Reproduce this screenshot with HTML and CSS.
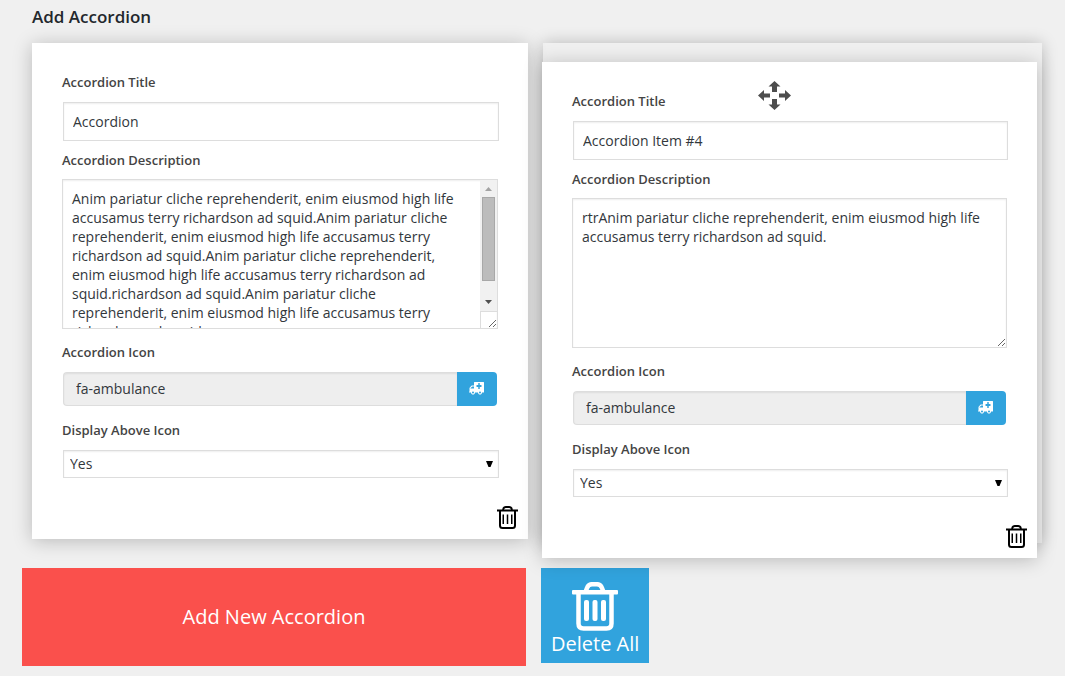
FILE: index.html
```html
<!DOCTYPE html>
<html lang="en">
<head>
<meta charset="utf-8">
<title>Add Accordion</title>
<link rel="stylesheet" href="styles.css">
</head>
<body>
<svg class="sprite" aria-hidden="true">
  <symbol id="ambulance" viewBox="0 0 1920 1792">
    <path fill-rule="evenodd" d="M640 1344a128 128 0 1 0-256 0 128 128 0 1 0 256 0zM192 832h448V576H450q-14 2-22 9L201 780q-7 12-9 22zM1536 1344a128 128 0 1 0-256 0 128 128 0 1 0 256 0zM1600 608V416q0-32-32-32h-192V160q0-32-32-32h-128q-32 0-32 32v224H992q-32 0-32 32v192q0 32 32 32h192v224q0 32 32 32h128q32 0 32-32V640h192q32 0 32-32zM1920 64v1216q0 64-64 64h-192q0 106-75 181t-181 75-181-75-75-181H768q0 106-75 181t-181 75-181-75-75-181H64q-64 0-64-64t64-64V800q0-26 13-58t32-51l198-198q19-19 51-32t58-13h224V64q0-64 64-64h1152q64 0 64 64z"/>
  </symbol>
  <symbol id="trash" viewBox="0 0 46 49">
    <path fill="none" stroke="currentColor" stroke-width="4.500" d="M13.500 10l1.500-4q1.500-3.800 5-3.800h5q3.500 0 5 3.800l1.500 4M6.500 10v31.500q0 5 5 5h23q5 0 5-5V10"/>
    <rect y="8" width="46" height="4.500" rx="1"/>
    <rect x="12" y="18" width="5" height="21" rx="2"/>
    <rect x="20.500" y="18" width="5" height="21" rx="2"/>
    <rect x="29" y="18" width="5" height="21" rx="2"/>
  </symbol>
  <symbol id="trash-small" viewBox="0 0 21 24">
    <path fill="none" stroke="currentColor" stroke-width="2" d="M6 5l.7-2q.5-1 2-1h3.600q1.500 0 2 1l.7 2M3 6v14.500q0 2.500 2.500 2.500h10q2.500 0 2.500-2.500V6"/>
    <path d="M0 4.500h21V6.500H0zM5.500 9.500H7V19H5.500zM9.750 9.500h1.500V19h-1.500zM14 9.500h1.500V19H14z"/>
  </symbol>
</svg>

<main class="page">
  <h1 class="page-title">Add Accordion</h1>

  <div class="board">
    <section class="card">
      <label class="label" for="title-1">Accordion Title</label>
      <input class="text" id="title-1" type="text" value="Accordion">
      <label class="label" for="desc-1">Accordion Description</label>
      <div class="area-wrap">
        <textarea class="area area-long" id="desc-1">Anim pariatur cliche reprehenderit, enim eiusmod high life accusamus terry richardson ad squid.Anim pariatur cliche reprehenderit, enim eiusmod high life accusamus terry richardson ad squid.Anim pariatur cliche reprehenderit, enim eiusmod high life accusamus terry richardson ad squid.richardson ad squid.Anim pariatur cliche reprehenderit, enim eiusmod high life accusamus terry richardson ad squid.</textarea>
        <div class="scrollbar" aria-hidden="true">
          <div class="track">
            <svg class="arrow arrow-up" viewBox="0 0 7 4"><path d="M0 4l3.500-4L7 4z"/></svg>
            <div class="thumb"></div>
            <svg class="arrow arrow-down" viewBox="0 0 7 4"><path d="M0 0l3.500 4L7 0z"/></svg>
          </div>
          <div class="corner"></div>
        </div>
      </div>
      <label class="label label-wide" for="icon-1">Accordion Icon</label>
      <div class="picker">
        <input class="picker-name" id="icon-1" type="text" value="fa-ambulance" readonly>
        <button class="picker-button" type="button" aria-label="Choose icon"><svg class="icon-ambulance"><use href="#ambulance"/></svg></button>
      </div>
      <label class="label label-wide" for="above-1">Display Above Icon</label>
      <select class="select" id="above-1"><option>Yes</option><option>No</option></select>
      <button class="remove" type="button" aria-label="Delete accordion"><svg class="icon-trash"><use href="#trash-small"/></svg></button>
    </section>

    <div class="drop-slot">
      <section class="card card-dragged">
        <svg class="move" viewBox="0 0 33 29" aria-hidden="true">
          <path d="M16.500 0l6 5.500H19V11h-5V5.500h-3.500zM16.500 29l6-5.500H19V18h-5v5.500h-3.500zM0 14.500L6 9v3.500h6v4H6V20zM33 14.500L27 9v3.500h-6v4h6V20z"/>
        </svg>
        <label class="label" for="title-2">Accordion Title</label>
        <input class="text" id="title-2" type="text" value="Accordion Item #4">
        <label class="label" for="desc-2">Accordion Description</label>
        <div class="area-wrap">
          <textarea class="area" id="desc-2">rtrAnim pariatur cliche reprehenderit, enim eiusmod high life accusamus terry richardson ad squid.</textarea>
        </div>
        <label class="label label-wide" for="icon-2">Accordion Icon</label>
        <div class="picker">
          <input class="picker-name" id="icon-2" type="text" value="fa-ambulance" readonly>
          <button class="picker-button" type="button" aria-label="Choose icon"><svg class="icon-ambulance"><use href="#ambulance"/></svg></button>
        </div>
        <label class="label label-wide" for="above-2">Display Above Icon</label>
        <select class="select" id="above-2"><option>Yes</option><option>No</option></select>
        <button class="remove" type="button" aria-label="Delete accordion"><svg class="icon-trash"><use href="#trash-small"/></svg></button>
      </section>
    </div>
  </div>

  <div class="actions">
    <button class="add" type="button">Add New Accordion</button>
    <button class="delete-all" type="button"><svg class="icon-trash-big"><use href="#trash"/></svg>Delete All</button>
  </div>
</main>
</body>
</html>
```
FILE: styles.css
```css
* { box-sizing: border-box; }

body {
  margin: 0;
  background: #f0f0f0;
  color: #444;
  font-family: "Open Sans", "Noto Sans", sans-serif;
  font-size: 14px;
  line-height: 19px;
}

button, input, textarea, select { font: inherit; color: inherit; }
input, textarea, select { color: #32373c; }
button { border: 0; padding: 0; cursor: pointer; }
svg { display: block; fill: currentColor; }
.sprite { position: absolute; width: 0; height: 0; }

.page { padding: 5px 23px 10px 32px; }

.page-title {
  margin: 0 0 14px;
  color: #23282d;
  font-size: 17px;
  line-height: 24px;
  font-weight: 600;
}

.board {
  display: grid;
  grid-template-columns: 496fr 499fr;
  gap: 15px;
  align-items: start;
}

.card {
  display: flex;
  flex-direction: column;
  padding: 29px 30px 10px;
  background: #fff;
  box-shadow: 0 2px 18px rgba(0, 0, 0, .23);
}

.drop-slot {
  position: relative;
  min-height: 500px;
  box-shadow: 0 0 15px rgba(0, 0, 0, .23);
}

.card-dragged {
  position: absolute;
  top: 19px;
  left: -1px;
  right: 5px;
}

.move {
  position: absolute;
  top: 19px;
  left: 216px;
  width: 33px;
  height: 29px;
  color: #4d4d4d;
}

.label {
  margin-bottom: 10px;
  font-size: 13px;
  line-height: 20px;
  font-weight: 600;
}

.label-wide { margin-top: 4px; }

.text, .area, .select {
  width: 100%;
  border: 1px solid #ddd;
  border-radius: 0;
  outline: 0;
  background-color: #fff;
  box-shadow: inset 0 1px 2px rgba(0, 0, 0, .07);
}

.text {
  height: 39px;
  margin: 0 0 9px 1px;
  padding: 0 9px;
}

.area-wrap {
  position: relative;
  margin: -1px 0 9px;
}

.area {
  display: block;
  height: 150px;
  padding: 9px;
  resize: both;
  scrollbar-width: none;
}

.area-long { padding-right: 26px; }

.scrollbar {
  position: absolute;
  top: 1px;
  right: 1px;
  bottom: 1px;
  display: flex;
  flex-direction: column;
  width: 17px;
  pointer-events: none;
}

.track {
  flex: 1;
  display: flex;
  flex-direction: column;
  align-items: center;
  padding: 7px 0;
  background: #f1f1f1;
}

.thumb {
  width: 13px;
  height: 84px;
  margin: 6px 0 auto;
  border: 1px solid #a8a8a8;
  background: #bcbcbc;
}

.arrow { width: 7px; height: 4px; }
.arrow-up { color: #a3a3a3; }
.arrow-down { color: #505050; }

.corner {
  height: 17px;
  border-top: 1px solid #ddd;
  border-left: 1px solid #ddd;
}

.picker {
  display: flex;
  height: 34px;
  margin: 0 1px 10px;
}

.picker-name {
  flex: 1;
  min-width: 0;
  padding: 0 12px 2px;
  border: 1px solid #ddd;
  border-right: 0;
  border-radius: 4px 0 0 4px;
  outline: 0;
  background: #eee;
  box-shadow: inset 0 1px 2px rgba(0, 0, 0, .07);
}

.picker-button {
  display: grid;
  place-items: center;
  width: 40px;
  padding: 0 1px 1px 0;
  border-radius: 0 4px 4px 0;
  background: #31a3dd;
  color: #fff;
}

.icon-ambulance { width: 15px; height: 14px; }

.select {
  height: 28px;
  margin-left: 1px;
  padding: 0 6px 2px;
  appearance: none;
  background-image: url("data:image/svg+xml,%3Csvg xmlns='http://www.w3.org/2000/svg' width='7' height='7'%3E%3Cpath d='M0 0h7L4.500 6h-2z'/%3E%3C/svg%3E");
  background-repeat: no-repeat;
  background-position: right 5px center;
}

.remove {
  align-self: flex-end;
  margin: 27px -20px 0 0;
  background: none;
  color: #000;
}

.icon-trash { width: 21px; height: 24px; }

.actions {
  display: flex;
  align-items: flex-start;
  gap: 15px;
  margin: 25px 0 0 -10px;
  font-size: 20px;
  line-height: 26px;
}

.add {
  width: 50%;
  max-width: 504px;
  padding: 36px 20px;
  background: #fa504c;
  color: #fff;
}

.delete-all {
  display: flex;
  flex-direction: column;
  align-items: center;
  padding: 14px 10px 6px;
  background: #31a3dd;
  color: #fff;
}

.icon-trash-big { width: 46px; height: 49px; }
```
